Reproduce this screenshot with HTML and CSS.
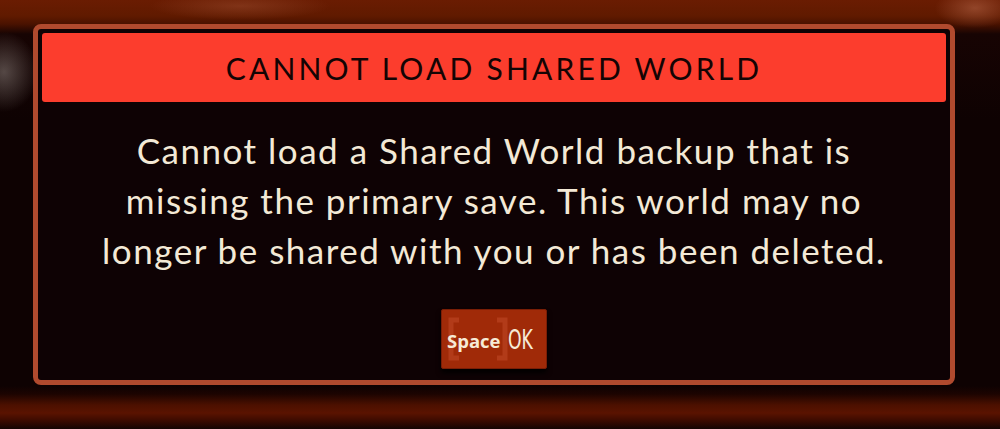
FILE: index.html
```html
<!DOCTYPE html>
<html lang="en">
<head>
<meta charset="utf-8">
<title>Cannot load shared world</title>
<link rel="stylesheet" href="styles.css">
</head>
<body>
<div class="scene">
  <div class="dialog">
    <div class="dialog-header">CANNOT LOAD SHARED WORLD</div>
    <div class="dialog-body">
      <p class="message">Cannot load a Shared World backup that is<br>missing the primary save. This world may no<br>longer be shared with you or has been deleted.</p>
    </div>
    <div class="dialog-actions">
      <button class="ok-button" type="button">
        <span class="key">
          <svg class="key-brackets" width="62" height="44" viewBox="0 0 62 44" aria-hidden="true">
            <path d="M12 3 H4 V41 H12" fill="none" stroke="#c8502e" stroke-opacity="0.45" stroke-width="5"/>
            <path d="M50 3 H58 V41 H50" fill="none" stroke="#c8502e" stroke-opacity="0.45" stroke-width="5"/>
          </svg>
          <span class="key-label">Space</span>
        </span>
        <span class="ok-label">OK</span>
      </button>
    </div>
  </div>
</div>
</body>
</html>
```
FILE: styles.css
```css
html, body {
  margin: 0;
  padding: 0;
}

body {
  width: 1000px;
  height: 429px;
  overflow: hidden;
  background:
    radial-gradient(ellipse 34px 40px at 4px 72px, rgba(150,140,135,0.5), rgba(150,140,135,0) 100%),
    radial-gradient(ellipse 90px 14px at 240px 6px, rgba(160,80,50,0.45), rgba(160,80,50,0) 100%),
    radial-gradient(ellipse 40px 20px at 975px 8px, rgba(190,110,80,0.5), rgba(190,110,80,0) 100%),
    linear-gradient(180deg,
      #6a1c02 0px,
      #601a00 16px,
      #4a1200 24px,
      #170403 34px,
      #0e0202 120px,
      #0e0202 386px,
      #1c0401 394px,
      #4c1000 405px,
      #5a1300 413px,
      #3a0a00 421px,
      #140402 429px);
  font-family: "Lato", "Open Sans", sans-serif;
}

.scene {
  padding: 24px 0 0 33px;
}

.dialog {
  box-sizing: border-box;
  width: 922px;
  height: 361px;
  border: 5px solid #b04a2e;
  border-radius: 8px;
  background: #0e0204;
  padding: 4px 4px 11px 4px;
  display: flex;
  flex-direction: column;
}

.dialog-header {
  height: 69px;
  background: #fc3d2d;
  border-radius: 3px;
  display: flex;
  align-items: center;
  justify-content: center;
  color: #140404;
  font-size: 30px;
  font-weight: 400;
  letter-spacing: 3.2px;
}

.dialog-body {
  flex: 1;
  display: flex;
  justify-content: center;
  padding-top: 23px;
}

.message {
  margin: 0;
  color: #f3e9d6;
  font-size: 35px;
  line-height: 50px;
  text-align: center;
  letter-spacing: 1.5px;
}

.dialog-actions {
  display: flex;
  justify-content: center;
}

.ok-button {
  box-sizing: border-box;
  width: 106px;
  height: 60px;
  border: 1px solid #7a1e06;
  border-radius: 2px;
  background: #a02a08;
  box-shadow: 0 4px 5px rgba(0,0,0,0.9);
  padding: 0 0 0 5px;
  display: flex;
  align-items: center;
  gap: 7px;
  cursor: pointer;
}

.key {
  position: relative;
  width: 62px;
  height: 44px;
  display: flex;
  align-items: center;
  justify-content: center;
}

.key-brackets {
  position: absolute;
  left: 0;
  top: 0;
}

.key-label {
  position: relative;
  color: #f6ead6;
  font-family: "Open Sans", "Lato", sans-serif;
  font-weight: 700;
  font-size: 18.5px;
  margin-top: 2px;
}

.ok-label {
  color: #f6ead6;
  font-family: "DejaVu Sans", sans-serif;
  font-size: 27px;
  display: inline-block;
  transform: scaleX(0.64);
  transform-origin: left center;
}
```
